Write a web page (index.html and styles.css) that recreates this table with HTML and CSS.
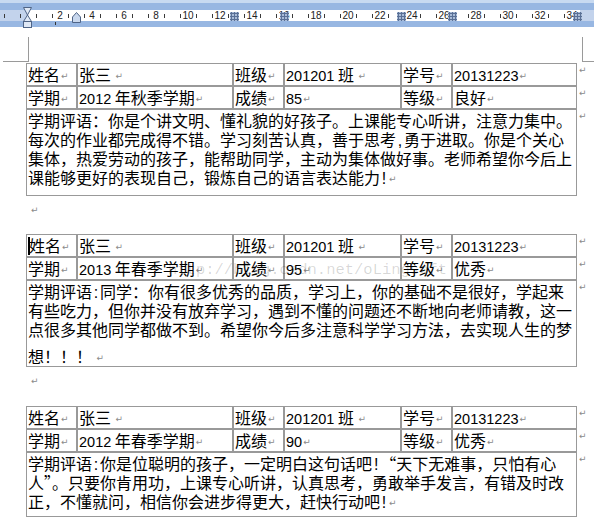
FILE: index.html
```html
<!DOCTYPE html>
<html>
<head>
<meta charset="utf-8">
<link rel="stylesheet" href="styles.css">
</head>
<body>
<div class="ruler">
  <div class="strip">
    <div class="nums"><span>2</span><span>4</span><span>6</span><span>8</span><span>10</span><span>12</span><span>14</span><span>16</span><span>18</span><span>20</span><span>22</span><span>24</span><span>26</span><span>28</span><span>30</span><span>32</span><span>34</span></div>
  </div>
  <svg class="mk hg" width="10" height="21" viewBox="0 0 10 21"><path d="M0.5 0.5H8.5L4.5 8Z" fill="#dfe8f5" stroke="#4f6486"/><path d="M4.5 8L8.5 14.5H0.5Z" fill="#dfe8f5" stroke="#4f6486"/><rect x="0.5" y="14.5" width="8" height="6" fill="#dfe8f5" stroke="#4f6486"/></svg>
  <svg class="mk hat" width="10" height="11" viewBox="0 0 10 11"><path d="M0.5 5L4.5 0.5L8.5 5V10.5H0.5Z" fill="#c9d8ee" stroke="#4f6486"/></svg>
  <svg class="mk grid g1" width="9" height="9" viewBox="0 0 9 9"><rect width="9" height="9" fill="#a9bcd8"/><path d="M0 1.5H9M0 4.5H9M0 7.5H9M1.5 0V9M4.5 0V9M7.5 0V9" stroke="#5a7096"/></svg>
  <svg class="mk grid g2" width="9" height="9" viewBox="0 0 9 9"><rect width="9" height="9" fill="#a9bcd8"/><path d="M0 1.5H9M0 4.5H9M0 7.5H9M1.5 0V9M4.5 0V9M7.5 0V9" stroke="#5a7096"/></svg>
  <svg class="mk grid g3" width="9" height="9" viewBox="0 0 9 9"><rect width="9" height="9" fill="#a9bcd8"/><path d="M0 1.5H9M0 4.5H9M0 7.5H9M1.5 0V9M4.5 0V9M7.5 0V9" stroke="#5a7096"/></svg>
  <svg class="mk grid g4" width="9" height="9" viewBox="0 0 9 9"><rect width="9" height="9" fill="#a9bcd8"/><path d="M0 1.5H9M0 4.5H9M0 7.5H9M1.5 0V9M4.5 0V9M7.5 0V9" stroke="#5a7096"/></svg>
  <svg class="mk grid g5" width="9" height="9" viewBox="0 0 9 9"><rect width="9" height="9" fill="#a9bcd8"/><path d="M0 1.5H9M0 4.5H9M0 7.5H9M1.5 0V9M4.5 0V9M7.5 0V9" stroke="#5a7096"/></svg>
  <span class="mk tick"></span>
</div>

<div class="corners"><div class="cl"></div><div class="cr"></div></div>

<table class="card">
  <colgroup><col class="c1"><col class="c2"><col class="c3"><col class="c4"><col class="c5"><col class="c6"><col class="c7"></colgroup>
  <tr><td>姓名<span class="pm">↵</span></td><td>张三 <span class="pm">↵</span></td><td>班级<span class="pm">↵</span></td><td><span class="en">201201</span> 班 <span class="pm">↵</span></td><td>学号<span class="pm">↵</span></td><td><span class="en">20131223</span><span class="pm">↵</span></td><td class="end">↵</td></tr>
  <tr><td>学期<span class="pm">↵</span></td><td><span class="en">2012</span> 年秋季学期<span class="pm">↵</span></td><td>成绩<span class="pm">↵</span></td><td><span class="en">85</span><span class="pm">↵</span></td><td>等级<span class="pm">↵</span></td><td>良好<span class="pm">↵</span></td><td class="end">↵</td></tr>
  <tr><td colspan="6" class="cm cm1">学期评语：你是个讲文明、懂礼貌的好孩子。上课能专心听讲，注意力集中。<br>每次的作业都完成得不错。学习刻苦认真，善于思考<span class="hw">,</span>勇于进取。你是个关心<br>集体，热爱劳动的孩子，能帮助同学，主动为集体做好事。老师希望你今后上<br>课能够更好的表现自己，锻炼自己的语言表达能力<span class="hw">!</span><span class="pm">↵</span></td><td class="end">↵</td></tr>
</table>
<div class="para p1"><span class="pm">↵</span></div>

<table class="card">
  <colgroup><col class="c1"><col class="c2"><col class="c3"><col class="c4"><col class="c5"><col class="c6"><col class="c7"></colgroup>
  <tr><td><span class="caret"></span>姓名<span class="pm">↵</span></td><td>张三 <span class="pm">↵</span></td><td>班级<span class="pm">↵</span></td><td><span class="en">201201</span> 班 <span class="pm">↵</span></td><td>学号<span class="pm">↵</span></td><td><span class="en">20131223</span><span class="pm">↵</span></td><td class="end">↵</td></tr>
  <tr><td>学期<span class="pm">↵</span></td><td><span class="en">2013</span> 年春季学期<span class="pm">↵</span></td><td>成绩<span class="pm">↵</span></td><td><span class="en">95</span><span class="pm">↵</span></td><td>等级<span class="pm">↵</span></td><td>优秀<span class="pm">↵</span></td><td class="end">↵</td></tr>
  <tr><td colspan="6" class="cm cm2">学期评语<span class="hw">:</span>同学：你有很多优秀的品质，学习上，你的基础不是很好，学起来<br>有些吃力，但你并没有放弃学习，遇到不懂的问题还不断地向老师请教，这一<br>点很多其他同学都做不到。希望你今后多注意科学学习方法，去实现人生的梦<div class="last">想！！！ <span class="pm">↵</span></div></td><td class="end">↵</td></tr>
</table>
<div class="para p2"><span class="pm">↵</span></div>

<table class="card">
  <colgroup><col class="c1"><col class="c2"><col class="c3"><col class="c4"><col class="c5"><col class="c6"><col class="c7"></colgroup>
  <tr><td>姓名<span class="pm">↵</span></td><td>张三 <span class="pm">↵</span></td><td>班级<span class="pm">↵</span></td><td><span class="en">201201</span> 班 <span class="pm">↵</span></td><td>学号<span class="pm">↵</span></td><td><span class="en">20131223</span><span class="pm">↵</span></td><td class="end">↵</td></tr>
  <tr><td>学期<span class="pm">↵</span></td><td><span class="en">2012</span> 年春季学期<span class="pm">↵</span></td><td>成绩<span class="pm">↵</span></td><td><span class="en">90</span><span class="pm">↵</span></td><td>等级<span class="pm">↵</span></td><td>优秀<span class="pm">↵</span></td><td class="end">↵</td></tr>
  <tr><td colspan="6" class="cm cm3">学期评语<span class="hw">:</span>你是位聪明的孩子，一定明白这句话吧<span class="hw">!</span>“天下无难事，只怕有心<br>人”。只要你肯用功，上课专心听讲，认真思考，勇敢举手发言，有错及时改<br>正，不懂就问，相信你会进步得更大，赶快行动吧<span class="hw">!</span><span class="pm">↵</span></td><td class="end">↵</td></tr>
</table>
<div class="para p3"><span class="pm">↵</span></div>

<div class="watermark">http://blog.csdn.net/oLingsoft</div>
</body>
</html>
```
FILE: styles.css
```css
body {
  margin: 0;
  width: 594px;
  height: 522px;
  overflow: hidden;
  position: relative;
  background: #fff;
  color: #000;
  font-family: "Noto Sans CJK SC", sans-serif;
  font-size: 16px;
}

.ruler {
  position: relative;
  height: 27px;
  box-sizing: border-box;
  border-top: 3px solid #c8daf1;
  background: #98b7e2;
  padding-top: 7px;
}
.strip {
  height: 11px;
  background:
    linear-gradient(to right, #3a3a3a 1px, transparent 1px) 4px 4px / 16px 4px repeat-x,
    linear-gradient(to right, #c3d3ec 27px, #fff 27px, #fff 580px, #c3d3ec 580px);
}
.nums {
  display: flex;
  padding-left: 44px;
}
.nums span {
  flex: 0 0 32px;
  text-align: center;
  font: 10px/11px "Liberation Sans", sans-serif;
  color: #222;
}
.mk { position: absolute; display: block; }
.hg { left: 23px; top: 4px; }
.hat { left: 72px; top: 9px; }
.grid { top: 9px; }
.g1 { left: 230px; }
.g2 { left: 280px; }
.g3 { left: 397px; }
.g4 { left: 448px; }
.g5 { left: 573px; }
.tick { left: 55px; top: 19px; width: 1px; height: 3px; background: #333; }

.corners {
  display: flex;
  justify-content: space-between;
  height: 25px;
  margin-top: 10px;
}
.cl {
  width: 25px;
  margin-left: 3px;
  border-right: 1px solid #9a9a9a;
  border-bottom: 1px solid #9a9a9a;
}
.cr {
  width: 11px;
  border-left: 1px solid #9a9a9a;
  border-bottom: 1px solid #9a9a9a;
}

.card {
  margin: 1px 0 0 26px;
  border-collapse: separate;
  border-spacing: 0;
  table-layout: fixed;
  width: 563px;
}
.card + .para + .card { margin-top: 0; }
.c1, .c3, .c5 { width: 51px; }
.c2 { width: 156px; }
.c4 { width: 117px; }
.c6 { width: 125px; }
.c7 { width: 12px; }
.card td {
  border: 1px solid #999;
  padding: 0 0 0 1px;
  height: 20px;
  line-height: 20px;
  white-space: nowrap;
  vertical-align: top;
  overflow: hidden;
}
.card td.end {
  border: none;
  padding: 3px 0 0 2px;
  font: 9px/9px "DejaVu Sans", sans-serif;
  color: #8a8a8a;
}
.card td.cm {
  line-height: 19px;
  padding-top: 1px;
}
.card td.cm1 { height: 76px; padding-bottom: 8px; }
.card td.cm2 { height: 84px; padding-bottom: 0; }
.card td.cm3 { height: 57px; padding-bottom: 5px; }
.last { margin-top: 8px; }

.en {
  font-family: "Liberation Sans", sans-serif;
  font-size: 14.5px;
  line-height: 0;
}
.hw {
  font-family: "Liberation Sans", sans-serif;
  margin: 0 1.8px;
  line-height: 0;
}
.pm {
  font: 9px/0 "DejaVu Sans", sans-serif;
  color: #8a8a8a;
  vertical-align: 2px;
  margin-left: 1px;
}
.caret {
  display: inline-block;
  width: 2px;
  height: 18px;
  background: #000;
  vertical-align: -3px;
  margin-right: -1px;
}

.para {
  box-sizing: border-box;
  padding-left: 30px;
  line-height: 24px;
}
.p1 { height: 38px; }
.p2 { height: 39px; }
.p3 { height: 24px; }

.watermark {
  position: absolute;
  left: 168px;
  top: 261px;
  font: 15.5px/18px "Liberation Mono", monospace;
  color: rgba(0, 0, 0, 0.16);
  pointer-events: none;
}
```
